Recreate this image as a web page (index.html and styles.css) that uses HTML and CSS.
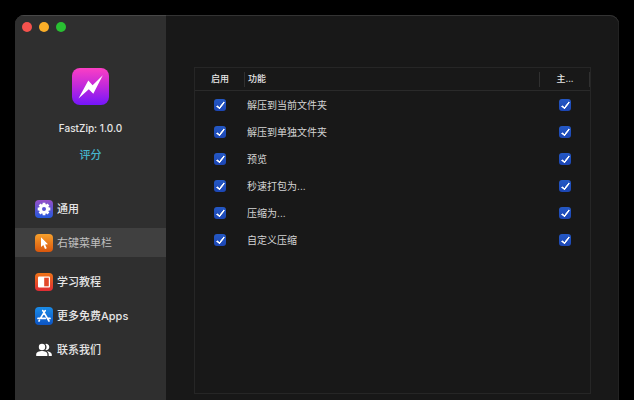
FILE: index.html
```html
<!DOCTYPE html>
<html lang="zh-CN">
<head>
    <meta charset="utf-8">
    <title>FastZip</title>
    <link rel="stylesheet" href="styles.css">
</head>
<body>
    <div class="window">
        <aside class="sidebar">
            <div class="lights">
                <button class="light red" aria-label="关闭"></button>
                <button class="light yellow" aria-label="最小化"></button>
                <button class="light green" aria-label="缩放"></button>
            </div>

            <div class="about">
                <svg class="logo" viewBox="0 0 37 37">
                    <defs>
                        <linearGradient id="logo-bg" x1="0" y1="0" x2="0" y2="1">
                            <stop offset="0" stop-color="#fb3fc4"/>
                            <stop offset="0.5" stop-color="#c028dc"/>
                            <stop offset="1" stop-color="#7416fb"/>
                        </linearGradient>
                    </defs>
                    <rect width="37" height="37" rx="8" fill="url(#logo-bg)"/>
                    <path d="M6.5 30.5 L16.3 12.5 L20.6 17.2 L30.8 7.2 L21.3 25.8 L16.8 21.2 Z" fill="#fff"/>
                </svg>
                <p class="version">FastZip: 1.0.0</p>
                <a class="rate" href="#">评分</a>
            </div>

            <nav class="menu">
                <a class="item" href="#">
                    <svg class="icon" viewBox="0 0 18 18">
                        <defs>
                            <linearGradient id="gear-bg" x1="0" y1="0" x2="0" y2="1">
                                <stop offset="0" stop-color="#9650c8"/>
                                <stop offset="1" stop-color="#2458dc"/>
                            </linearGradient>
                        </defs>
                        <rect width="18" height="18" rx="4" fill="url(#gear-bg)"/>
                        <g stroke="#fff" stroke-width="2.8">
                            <path d="M9 2.7V15.3M2.7 9H15.3M4.6 4.6L13.4 13.4M13.4 4.6L4.6 13.4"/>
                        </g>
                        <circle cx="9" cy="9" r="5" fill="#fff"/>
                        <circle cx="9" cy="9" r="2" fill="#5a55d2"/>
                    </svg>
                    <span>通用</span>
                </a>
                <a class="item active" href="#">
                    <svg class="icon" viewBox="0 0 18 18">
                        <defs>
                            <linearGradient id="cursor-bg" x1="0" y1="0" x2="0" y2="1">
                                <stop offset="0" stop-color="#f7a02c"/>
                                <stop offset="1" stop-color="#d9560c"/>
                            </linearGradient>
                        </defs>
                        <rect width="18" height="18" rx="4" fill="url(#cursor-bg)"/>
                        <path d="M6 3.2V13L8.3 11L10 15L11.8 14.2L10.1 10.4L13 10.2Z" fill="#fff"/>
                    </svg>
                    <span>右键菜单栏</span>
                </a>
                <a class="item group" href="#">
                    <svg class="icon" viewBox="0 0 18 18">
                        <defs>
                            <linearGradient id="book-bg" x1="0" y1="0" x2="0" y2="1">
                                <stop offset="0" stop-color="#ee7418"/>
                                <stop offset="1" stop-color="#e02c34"/>
                            </linearGradient>
                        </defs>
                        <rect width="18" height="18" rx="4" fill="url(#book-bg)"/>
                        <rect x="3" y="3.5" width="12" height="11" rx="1" fill="#fff"/>
                        <rect x="9.2" y="4.7" width="4.6" height="8.6" fill="#e2482a"/>
                    </svg>
                    <span>学习教程</span>
                </a>
                <a class="item" href="#">
                    <svg class="icon" viewBox="0 0 18 18">
                        <defs>
                            <linearGradient id="store-bg" x1="0" y1="0" x2="0" y2="1">
                                <stop offset="0" stop-color="#1a8ce8"/>
                                <stop offset="1" stop-color="#0c54c4"/>
                            </linearGradient>
                        </defs>
                        <rect width="18" height="18" rx="4" fill="url(#store-bg)"/>
                        <g fill="none" stroke="#fff" stroke-width="1.7" stroke-linecap="round">
                            <path d="M10.2 3.6L5.4 11.4M7.8 3.6L14 14M3 11.4H10.2M12.8 11.4H15M4.4 13.3L4 14"/>
                        </g>
                    </svg>
                    <span>更多免费Apps</span>
                </a>
                <a class="item" href="#">
                    <svg class="icon" viewBox="0 0 18 18" fill="#fff">
                        <circle cx="7" cy="6" r="3.2"/>
                        <path d="M1.2 15V13.4C1.2 11 4.4 10.1 7 10.1S12.4 11 12.4 13.4V15Z"/>
                        <path d="M10.3 2.9A3.2 3.2 0 1 1 10.3 9.1A4.4 4.4 0 0 0 10.3 2.9Z"/>
                        <path d="M11.8 10.2C14.3 10.5 16.8 11.5 16.8 13.4V15H13.7V13.4C13.7 12 13 11 11.8 10.2Z"/>
                    </svg>
                    <span>联系我们</span>
                </a>
            </nav>
        </aside>

        <main class="content">
            <div class="panel">
                <table class="features">
                    <thead>
                        <tr>
                            <th class="check" scope="col">启用</th>
                            <th class="name" scope="col">功能</th>
                            <th class="check" scope="col">主...</th>
                        </tr>
                    </thead>
                    <tbody>
                        <tr>
                            <td class="check"><input type="checkbox" id="f1" checked></td>
                            <td class="name"><label for="f1">解压到当前文件夹</label></td>
                            <td class="check"><input type="checkbox" aria-label="解压到当前文件夹" checked></td>
                        </tr>
                        <tr>
                            <td class="check"><input type="checkbox" id="f2" checked></td>
                            <td class="name"><label for="f2">解压到单独文件夹</label></td>
                            <td class="check"><input type="checkbox" aria-label="解压到单独文件夹" checked></td>
                        </tr>
                        <tr>
                            <td class="check"><input type="checkbox" id="f3" checked></td>
                            <td class="name"><label for="f3">预览</label></td>
                            <td class="check"><input type="checkbox" aria-label="预览" checked></td>
                        </tr>
                        <tr>
                            <td class="check"><input type="checkbox" id="f4" checked></td>
                            <td class="name"><label for="f4">秒速打包为...</label></td>
                            <td class="check"><input type="checkbox" aria-label="秒速打包为..." checked></td>
                        </tr>
                        <tr>
                            <td class="check"><input type="checkbox" id="f5" checked></td>
                            <td class="name"><label for="f5">压缩为...</label></td>
                            <td class="check"><input type="checkbox" aria-label="压缩为..." checked></td>
                        </tr>
                        <tr>
                            <td class="check"><input type="checkbox" id="f6" checked></td>
                            <td class="name"><label for="f6">自定义压缩</label></td>
                            <td class="check"><input type="checkbox" aria-label="自定义压缩" checked></td>
                        </tr>
                    </tbody>
                </table>
            </div>
        </main>
    </div>
</body>
</html>
```
FILE: styles.css
```css
*,
*::before{
    box-sizing: border-box;
}

body{
    margin: 0;
    padding: 15px 15px 0;
    min-height: 100vh;
    display: flex;
    background-color: #000;
    color: #e6e6e6;
    font-family: Inter, "Noto Sans CJK SC", sans-serif;
    font-size: 11px;
    line-height: 16px;
}

a{
    color: inherit;
    text-decoration: none;
}

.window{
    flex: 1;
    display: flex;
    background-color: #181818;
    border-radius: 9px 9px 0 0;
    box-shadow: inset 0 1px 0 #333, inset -1px 0 0 #222;
    overflow: hidden;
}

/* sidebar */

.sidebar{
    width: 151px;
    flex-shrink: 0;
    background-color: #2f2f2f;
    box-shadow: inset 0 1px 0 #484848;
}

.lights{
    display: flex;
    gap: 7px;
    padding: 7px 7px 0;
}

.light{
    width: 10px;
    height: 10px;
    padding: 0;
    border: none;
    border-radius: 50%;
}

.red{
    background-color: #f5524d;
}

.yellow{
    background-color: #fbae28;
}

.green{
    background-color: #29c032;
}

.about{
    display: flex;
    flex-direction: column;
    align-items: center;
    padding-top: 36px;
}

.logo{
    width: 37px;
    height: 37px;
}

.version{
    margin: 15px 0 11px;
    font-size: 10px;
    font-weight: 500;
}

.rate{
    color: #46b4cc;
    font-weight: 500;
}

.menu{
    display: flex;
    flex-direction: column;
    gap: 5px;
    margin-top: 31px;
}

.item{
    display: flex;
    align-items: center;
    gap: 4px;
    height: 29px;
    padding-left: 20px;
    font-weight: 500;
    white-space: nowrap;
}

.item.active{
    background-color: #404040;
    color: #c0c0c0;
    font-weight: 400;
}

.item.group{
    margin-top: 5px;
}

.icon{
    width: 18px;
    height: 18px;
}

/* feature table */

.content{
    flex: 1;
    display: flex;
    padding: 52px 28px 6px;
}

.panel{
    flex: 1;
    border: 1px solid #262626;
}

.features{
    width: 100%;
    border-collapse: separate;
    border-spacing: 0;
    table-layout: fixed;
    font-size: 10px;
}

.features th{
    height: 23px;
    padding: 0;
    border-bottom: 1px solid #2a2a2a;
    font-size: 9px;
    font-weight: 500;
    background: linear-gradient(#303030, #303030) no-repeat right center / 1px 15px;
}

.features th.name{
    padding-left: 3px;
}

.features td{
    height: 27px;
    padding: 0;
    color: #d4d4d4;
}

.features .check{
    width: 50px;
    text-align: center;
}

.features .name{
    text-align: left;
}

.features td.name{
    padding-left: 2px;
}

input[type="checkbox"]{
    appearance: none;
    display: block;
    width: 12px;
    height: 12px;
    margin: 0 auto;
    border-radius: 3px;
    background: linear-gradient(#2458c4, #1c46b4);
}

/* tick mark */
input[type="checkbox"]:checked::before{
    content: "";
    display: block;
    width: 5px;
    height: 9px;
    margin: 0 auto;
    border: solid #fff;
    border-width: 0 2px 2px 0;
    border-radius: 1px;
    transform: translateY(1px) rotate(38deg);
}
```
